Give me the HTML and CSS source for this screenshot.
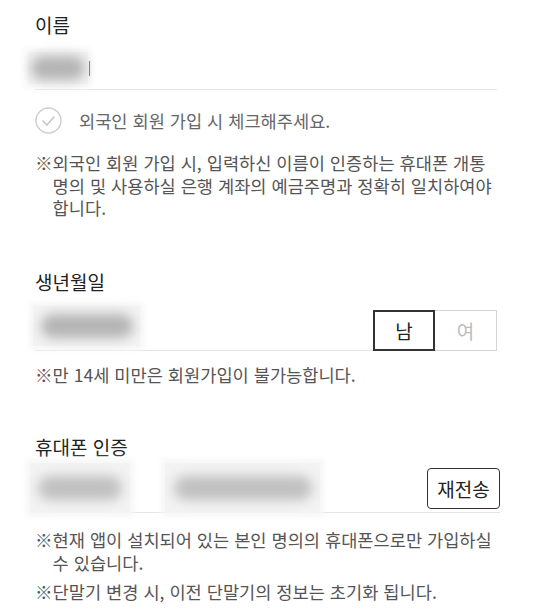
FILE: index.html
```html
<!DOCTYPE html>
<html lang="ko">
<head>
  <meta charset="UTF-8" />
  <title>회원가입</title>
  <link rel="stylesheet" href="styles.css">
</head>
<body>
  <div class="form">
    <section class="field">
      <h3 class="label">이름</h3>
      <div class="input-line name-line">
        <span class="masked name-mask"><span class="ink"></span></span>
        <span class="caret"></span>
      </div>
      <label class="check-row">
        <svg class="check" width="27" height="27" viewBox="0 0 27 27">
          <circle cx="13.5" cy="13.5" r="12.5" fill="none" stroke="#cfcfcf" stroke-width="1.5" />
          <polyline points="7.5,13.5 11.8,18 19.5,9.5" fill="none" stroke="#c8c8c8" stroke-width="1.6" />
        </svg>
        <span>외국인 회원 가입 시 체크해주세요.</span>
      </label>
      <p class="notice first">※외국인 회원 가입 시, 입력하신 이름이 인증하는 휴대폰 개통 명의 및 사용하실 은행 계좌의 예금주명과 정확히 일치하여야 합니다.</p>
    </section>

    <section class="field">
      <h3 class="label gap">생년월일</h3>
      <div class="birth-row">
        <div class="input-line birth-line">
          <span class="masked birth-mask"><span class="ink"></span></span>
        </div>
        <div class="gender">
          <button class="gender-btn active">남</button>
          <button class="gender-btn">여</button>
        </div>
      </div>
      <p class="notice age">※만 14세 미만은 회원가입이 불가능합니다.</p>
    </section>

    <section class="field">
      <h3 class="label gap phone-label">휴대폰 인증</h3>
      <div class="input-line phone-line">
        <span class="masked phone-mask-a"><span class="ink"></span></span>
        <span class="masked phone-mask-b"><span class="ink"></span></span>
        <button class="resend">재전송</button>
      </div>
      <p class="notice phone">※현재 앱이 설치되어 있는 본인 명의의 휴대폰으로만 가입하실 수 있습니다.</p>
      <p class="notice last">※단말기 변경 시, 이전 단말기의 정보는 초기화 됩니다.</p>
    </section>
  </div>
</body>
</html>
```

FILE: styles.css
```css
body {
  margin: 0;
  background: #fff;
  color: #222;
  font-family: "Noto Sans CJK KR", "Noto Sans", sans-serif;
}
.form {
  padding: 13px 43px 0 35px;
}
.label {
  margin: 0;
  font-size: 19px;
  font-weight: 400;
  line-height: 24px;
}
.label.gap {
  margin-top: 50px;
}
.label.phone-label {
  margin-top: 49px;
}
.input-line {
  display: flex;
  box-sizing: border-box;
  border-bottom: 1px solid #e4e4e4;
}
.masked {
  display: flex;
  align-items: center;
  background: #f3f3f3;
  box-shadow: 0 0 6px 4px #f7f7f7;
}
.ink {
  display: block;
  background: #b4b4b4;
  border-radius: 12px;
  filter: blur(6px);
}
.name-line {
  height: 53px;
  align-items: flex-start;
  padding-top: 15px;
}
.name-mask {
  width: 60px;
  height: 32px;
  margin-left: -7px;
  justify-content: center;
}
.name-mask .ink {
  width: 54px;
  height: 24px;
}
.caret {
  width: 1px;
  height: 15px;
  margin: 9px 0 0 1px;
  background: #777;
}
.check-row {
  display: flex;
  align-items: center;
  gap: 17px;
  margin-top: 17px;
  font-size: 17.6px;
  color: #666;
}
.check {
  display: block;
  flex: none;
}
.notice {
  margin: 0;
  padding-left: 1em;
  text-indent: -1em;
  font-size: 17.6px;
  line-height: 22.5px;
  color: #555;
}
.notice.first {
  margin-top: 18px;
}
.birth-row {
  display: flex;
  align-items: flex-end;
  margin-top: 10px;
  height: 47px;
}
.birth-line {
  flex: 1;
  height: 47px;
  align-items: flex-start;
  padding-top: 2px;
}
.birth-mask {
  width: 107px;
  height: 40px;
  margin-left: -2px;
  padding-left: 8px;
  box-sizing: border-box;
}
.birth-mask .ink {
  width: 92px;
  height: 24px;
}
.gender {
  display: flex;
}
.gender-btn {
  box-sizing: border-box;
  width: 62px;
  height: 41px;
  padding: 0;
  background: #fff;
  border: 1px solid #d4d4d4;
  border-left: none;
  font-family: inherit;
  font-size: 19px;
  color: #bbb;
}
.gender-btn.active {
  border: 2px solid #333;
  color: #222;
}
.notice.age {
  margin-top: 13px;
}
.phone-line {
  height: 51px;
  margin-top: 3px;
  margin-right: -3px;
  align-items: flex-end;
}
.phone-mask-a,
.phone-mask-b {
  height: 50px;
  margin-bottom: -1px;
  justify-content: center;
}
.phone-mask-a .ink,
.phone-mask-b .ink {
  background: #c0c0c0;
}
.phone-mask-a {
  width: 100px;
  margin-left: -5px;
}
.phone-mask-a .ink {
  width: 84px;
  height: 24px;
}
.phone-mask-b {
  width: 155px;
  margin-left: 35px;
}
.phone-mask-b .ink {
  width: 138px;
  height: 24px;
}
.resend {
  margin: 0 0 3px auto;
  box-sizing: border-box;
  width: 73px;
  height: 41px;
  padding: 0;
  background: #fff;
  border: 1.5px solid #333;
  border-radius: 4px;
  font-family: inherit;
  font-size: 19px;
  color: #222;
}
.notice.phone {
  margin-top: 16px;
}
.notice.last {
  margin-top: 7px;
}
```
